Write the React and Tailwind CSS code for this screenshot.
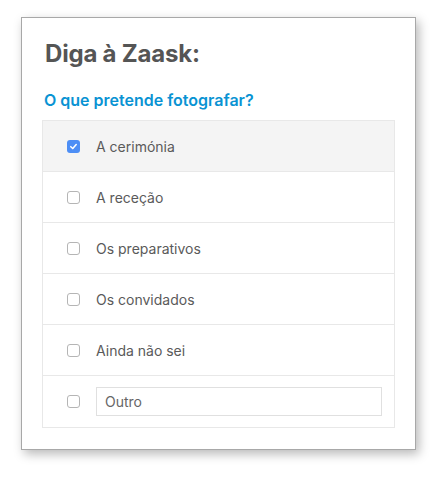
import React from "react";

const items = [
  { label: "A cerimónia", checked: true },
  { label: "A receção" },
  { label: "Os preparativos" },
  { label: "Os convidados" },
  { label: "Ainda não sei" },
];

function Box({ checked }) {
  if (checked) {
    return (
      <span className="flex h-[13px] w-[13px] items-center justify-center rounded-[3px] bg-[#4d8ef5]">
        <svg width="9" height="9" viewBox="0 0 10 10">
          <path d="M2 5.2 L4.2 7.3 L8 2.8" fill="none" stroke="white" strokeWidth="1.7" strokeLinecap="round" strokeLinejoin="round" />
        </svg>
      </span>
    );
  }
  return <span className="block h-[13px] w-[13px] rounded-[3px] border border-[#b5b5b5] bg-white" />;
}

export default function App() {
  return (
    <div className="min-h-[483px] w-[437px] bg-white pl-[21px] pt-[17px]" style={{ fontFamily: "Inter, 'Noto Sans', sans-serif" }}>
      <div className="w-[395px] h-[433px] border border-[#a8a8a8] bg-white px-5 pt-[20px] shadow-[3px_4px_10px_rgba(0,0,0,0.28)]">
        <h1 className="pl-[3px] text-[24px] font-bold leading-[32px] text-[#555555] tracking-[-0.2px]">Diga à Zaask:</h1>
        <h2 className="mt-[20px] pl-[2px] text-[16px] font-semibold leading-[20px] text-[#0993d3]">O que pretende fotografar?</h2>
        <div className="mt-[10px] border border-[#e8e8e8]">
          {items.map((it, i) => (
            <div
              key={i}
              className={`flex h-[51px] items-center border-b border-[#e8e8e8] pl-[24px] ${it.checked ? "bg-[#f4f4f4]" : "bg-white"}`}
            >
              <Box checked={it.checked} />
              <span className="ml-[16px] text-[14px] text-[#5a5a5a]">{it.label}</span>
            </div>
          ))}
          <div className="flex h-[51px] items-center pl-[24px] pr-[12px]">
            <Box />
            <div className="ml-[16px] flex h-[29px] flex-1 items-center border border-[#e0e0e0] pl-[8px] text-[14px] text-[#666666]">
              Outro
            </div>
          </div>
        </div>
      </div>
    </div>
  );
}
